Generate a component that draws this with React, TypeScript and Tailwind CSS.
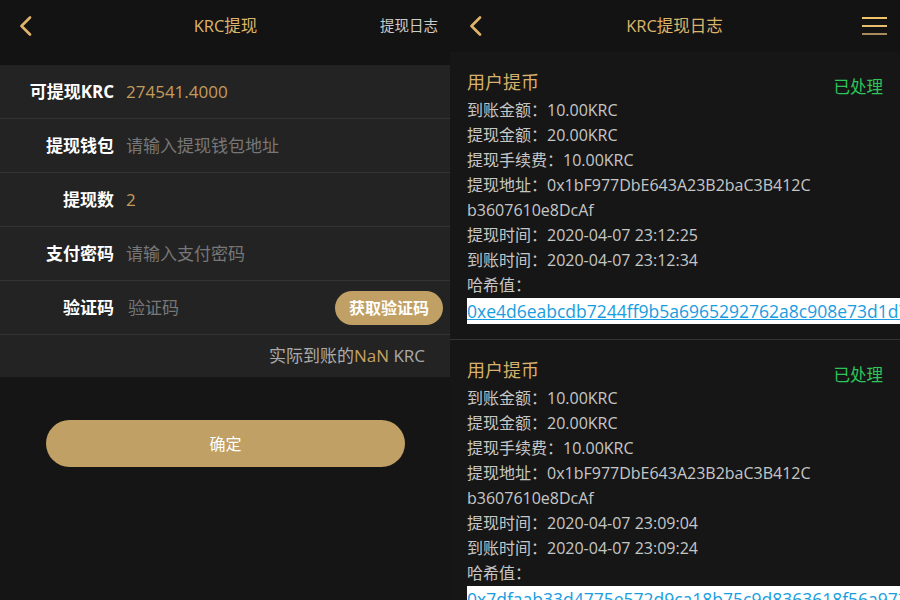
const font = { fontFamily: '"Open Sans", "Noto Sans CJK SC", sans-serif' };

type Record = {
    arrive: string;
    amount: string;
    fee: string;
    addr1: string;
    addr2: string;
    applyTime: string;
    arriveTime: string;
    hash: string;
};

const records: Record[] = [
    {
        arrive: "10.00KRC",
        amount: "20.00KRC",
        fee: "10.00KRC",
        addr1: "0x1bF977DbE643A23B2baC3B412C",
        addr2: "b3607610e8DcAf",
        applyTime: "2020-04-07 23:12:25",
        arriveTime: "2020-04-07 23:12:34",
        hash: "0xe4d6eabcdb7244ff9b5a6965292762a8c908e73d1d7a6c0e",
    },
    {
        arrive: "10.00KRC",
        amount: "20.00KRC",
        fee: "10.00KRC",
        addr1: "0x1bF977DbE643A23B2baC3B412C",
        addr2: "b3607610e8DcAf",
        applyTime: "2020-04-07 23:09:04",
        arriveTime: "2020-04-07 23:09:24",
        hash: "0x7dfaab33d4775e572d9ca18b75c9d8363618f56a97360b2c",
    },
];

function BackArrow() {
    return (
        <svg width="14" height="20" viewBox="0 0 14 20" fill="none">
            <polyline
                points="11,1.5 2.5,10 11,18.5"
                stroke="#e0b469"
                strokeWidth="2.6"
                strokeLinecap="round"
                strokeLinejoin="round"
            />
        </svg>
    );
}

function FormRow({ label, children }: { label: string; children: React.ReactNode }) {
    return (
        <div className="flex items-center h-[54px] border-b border-[#333333]">
            <div className="w-[114px] text-right text-[17px] font-bold text-white">{label}</div>
            <div className="flex-1 flex items-center pl-[12px] pr-[7px] text-[17px]">{children}</div>
        </div>
    );
}

function WithdrawPanel() {
    return (
        <div className="w-[450px] h-[600px] bg-[#151515] flex flex-col">
            {/* Header */}
            <div className="h-[52px] flex items-center justify-between pl-[19px] pr-[12px] bg-[#131313]">
                <BackArrow />
                <div className="text-[16.5px] text-[#dcb46a] pl-[38px]">KRC提现</div>
                <div className="text-[14.5px] text-[#cccccc]">提现日志</div>
            </div>
            <div className="h-[13px] bg-[#131313]" />

            {/* Form */}
            <div className="bg-[#232323]">
                <FormRow label="可提现KRC">
                    <span className="text-[#c39c5c]">274541.4000</span>
                </FormRow>
                <FormRow label="提现钱包">
                    <span className="text-[#777777]">请输入提现钱包地址</span>
                </FormRow>
                <FormRow label="提现数">
                    <span className="text-[#c39c5c]">2</span>
                </FormRow>
                <FormRow label="支付密码">
                    <span className="text-[#777777]">请输入支付密码</span>
                </FormRow>
                <FormRow label="验证码">
                    <span className="text-[#777777] pl-[2px]">验证码</span>
                    <button className="ml-auto h-[34px] px-[14px] rounded-full bg-[#c0a064] text-white text-[16px] font-semibold">
                        获取验证码
                    </button>
                </FormRow>
                <div className="h-[42px] flex items-center justify-end pr-[25px] text-[17px]">
                    <span className="text-[#aaaaaa]">实际到账的</span>
                    <span className="text-[#c8a060]">NaN</span>
                    <span className="text-[#aaaaaa]">&nbsp;KRC</span>
                </div>
            </div>

            {/* Submit */}
            <div className="px-[46px] pt-[43px]">
                <button className="w-[359px] h-[47px] rounded-full bg-[#c0a064] text-white text-[16px]">
                    确定
                </button>
            </div>
        </div>
    );
}

function LogCard({ r }: { r: Record }) {
    return (
        <div className="pl-[17px] pr-[17px] pt-[15px] pb-[14px] border-b border-[#333333]">
            <div className="flex justify-between h-[31px]">
                <div className="text-[18px] leading-[31px] text-[#d6b06c]">用户提币</div>
                <div className="self-end text-[16.5px] leading-[22px] text-[#2dc45c]">已处理</div>
            </div>
            <div className="text-[16px] leading-[25px] text-[#c6c6c6]">
                <div>到账金额：{r.arrive}</div>
                <div>提现金额：{r.amount}</div>
                <div>提现手续费：{r.fee}</div>
                <div>提现地址：{r.addr1}</div>
                <div>{r.addr2}</div>
                <div>提现时间：{r.applyTime}</div>
                <div>到账时间：{r.arriveTime}</div>
                <div>哈希值：</div>
                <div className="whitespace-nowrap pt-[2px]">
                    <span className="bg-white text-[#1a9de0] underline text-[17.5px] leading-[19px] py-[1px]">
                        {r.hash}
                    </span>
                </div>
            </div>
        </div>
    );
}

function LogPanel() {
    return (
        <div className="w-[450px] h-[600px] bg-[#161616] flex flex-col overflow-hidden">
            <div className="h-[52px] shrink-0 flex items-center justify-between pl-[19px] pr-[13px] bg-[#131313]">
                <BackArrow />
                <div className="text-[16.5px] text-[#dcb46a] pl-[4px]">KRC提现日志</div>
                <div className="w-[25px] flex flex-col gap-[6px]">
                    <div className="h-[2px] bg-[#f2c46a]" />
                    <div className="h-[2px] bg-[#e6bd6c]" />
                    <div className="h-[2px] bg-[#a88d5c]" />
                </div>
            </div>
            {records.map((r, i) => (
                <LogCard key={i} r={r} />
            ))}
        </div>
    );
}

export default function App() {
    return (
        <div className="w-[900px] h-[600px] flex overflow-hidden" style={font}>
            <WithdrawPanel />
            <LogPanel />
        </div>
    );
}
